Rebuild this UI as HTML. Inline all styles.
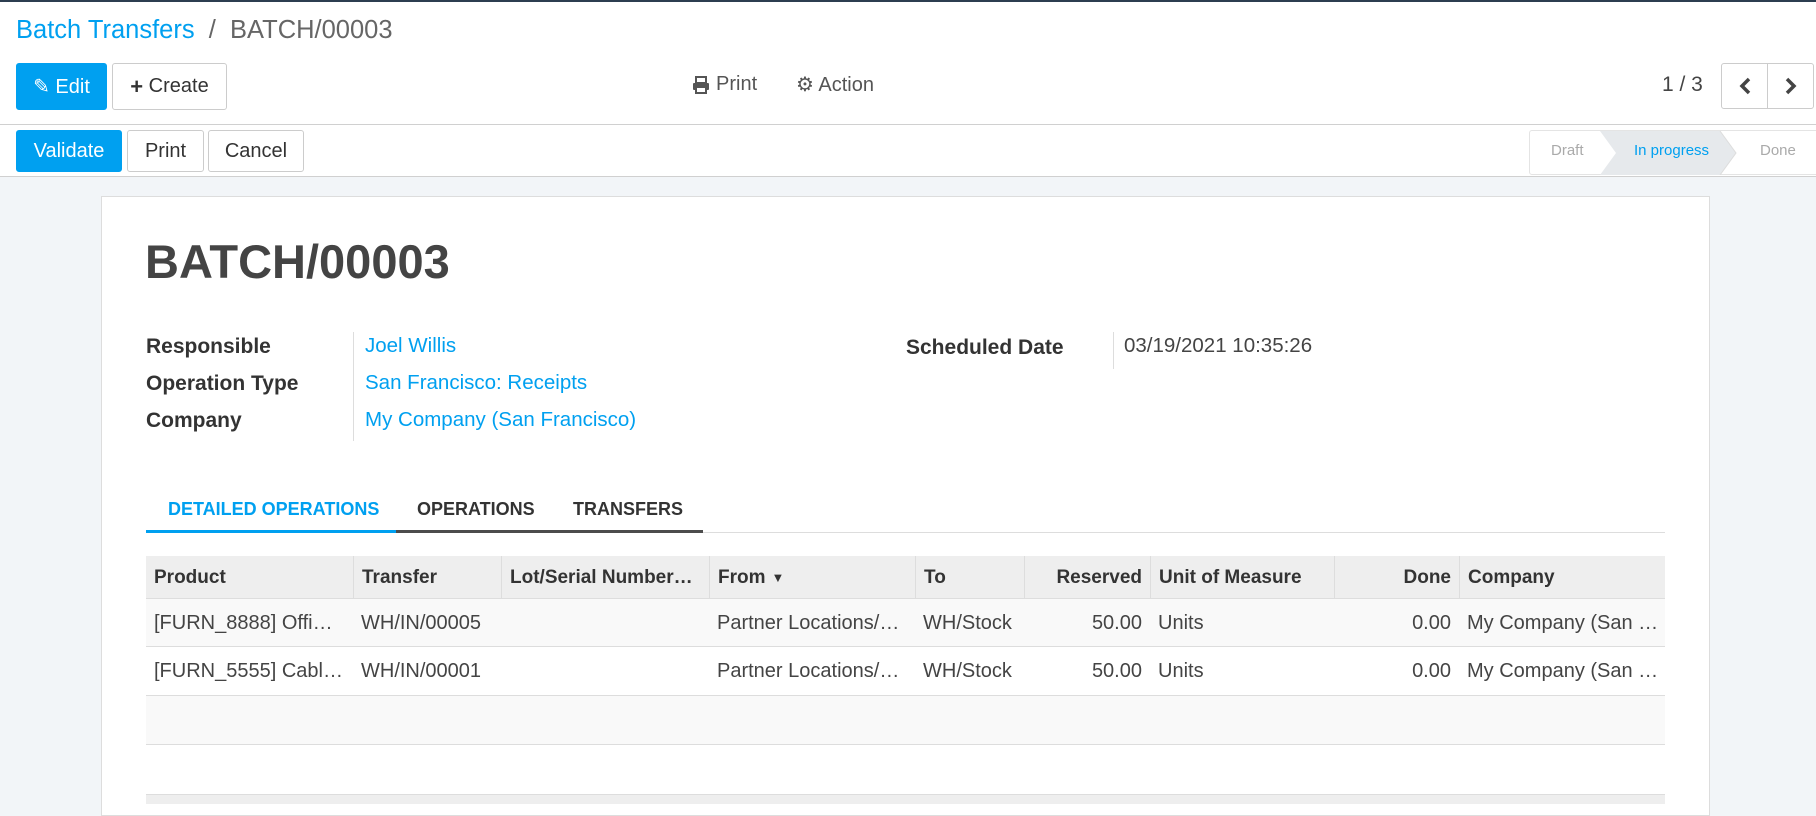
<!DOCTYPE html>
<html><head><meta charset="utf-8"><style>
*{box-sizing:border-box;margin:0;padding:0}
body{width:1816px;height:802px;overflow:hidden;font-family:"Liberation Sans",sans-serif;color:#4c4c4c;background:#f2f5f8;position:relative;font-size:18px}
.abs{position:absolute}
.top{position:absolute;left:0;top:0;width:1816px;height:177px;background:#fff;border-bottom:1px solid #d0d0d0}
.btn{position:absolute;height:47px;border:1px solid #ccc;border-radius:3px;background:#fff;display:flex;align-items:center;justify-content:center;font-size:19px;color:#333}
.pri{background:#00a0f0;border-color:#00a0f0;color:#fff}
.sheet{position:absolute;left:101px;top:196px;width:1609px;height:620px;background:#fff;border:1px solid #ddd}
.lbl{position:absolute;font-weight:bold;font-size:21px;color:#333}
.val{position:absolute;font-size:20.5px;color:#00a0f0}
.th,.td{position:absolute;display:flex;align-items:center;padding:0 8px;white-space:nowrap;overflow:hidden}
.th{font-weight:bold;font-size:19px;color:#333;border-left:1px solid #ddd}
.td{font-size:20px;color:#444}
</style></head><body>
<div class="top">
 <div class="abs" style="left:0;top:0;width:1816px;height:2px;background:#2c3e50"></div>
 <div class="abs" style="left:16px;top:16px;font-size:25.5px;color:#666"><span style="color:#00a0f0">Batch Transfers</span> &nbsp;/&nbsp; BATCH/00003</div>
 <div class="btn pri" style="left:16px;top:63px;width:91px;font-size:20px">&#9998;&nbsp;Edit</div>
 <div class="btn" style="left:112px;top:63px;width:115px;font-size:20px"><b style="font-size:22px">+</b>&nbsp;Create</div>
 <svg class="abs" style="left:692px;top:76px" width="18" height="18" viewBox="0 0 18 18"><rect x="4" y="1" width="10" height="6" fill="none" stroke="#555" stroke-width="2"/><rect x="1" y="7" width="16" height="7" rx="1" fill="#555"/><rect x="4" y="11" width="10" height="6" fill="#fff" stroke="#555" stroke-width="2"/></svg>
 <div class="abs" style="left:716px;top:73px;font-size:20px;color:#555">Print</div>
 <div class="abs" style="left:796px;top:72px;font-size:20px;color:#555">&#9881; Action</div>
 <div class="abs" style="left:1662px;top:73px;font-size:21px;color:#444">1 / 3</div>
 <div class="btn" style="left:1721px;top:63px;width:47px;height:46px;border-radius:3px 0 0 3px"><svg width="14" height="18"><polyline points="11,2 4,9 11,16" fill="none" stroke="#444" stroke-width="3.5"/></svg></div>
 <div class="btn" style="left:1767px;top:63px;width:47px;height:46px;border-radius:0 3px 3px 0"><svg width="14" height="18"><polyline points="3,2 10,9 3,16" fill="none" stroke="#444" stroke-width="3.5"/></svg></div>
 <div class="abs" style="left:0;top:124px;width:1816px;height:1px;background:#d0d0d0"></div>
 <div class="btn pri" style="left:16px;top:130px;width:106px;height:42px;font-size:20px">Validate</div>
 <div class="btn" style="left:127px;top:130px;width:77px;height:42px;font-size:20px">Print</div>
 <div class="btn" style="left:208px;top:130px;width:96px;height:42px;font-size:20px">Cancel</div>
 <div class="abs" style="left:1529px;top:130px;width:290px;height:45px;border:1px solid #e4e4e4;border-radius:3px"></div>
 <svg class="abs" style="left:1600px;top:131px" width="140" height="44"><polygon points="0,0 120,0 136,22 120,44 0,44 16,22" fill="#e6e9ec"/><polyline points="120,0 136,22 120,44" fill="none" stroke="#ddd"/></svg>
 <div class="abs" style="left:1551px;top:142px;font-size:15px;color:#aaa">Draft</div>
 <div class="abs" style="left:1634px;top:142px;font-size:15px;color:#00a0f0">In progress</div>
 <div class="abs" style="left:1760px;top:142px;font-size:15px;color:#aaa">Done</div>
</div>
<div class="sheet"></div>
<div class="abs" style="left:145px;top:234px;font-size:47px;font-weight:bold;color:#444">BATCH/00003</div>
<div class="lbl" style="left:146px;top:335px">Responsible</div>
<div class="lbl" style="left:146px;top:372px">Operation Type</div>
<div class="lbl" style="left:146px;top:409px">Company</div>
<div class="abs" style="left:353px;top:332px;width:1px;height:109px;background:#ddd"></div>
<div class="val" style="left:365px;top:334px">Joel Willis</div>
<div class="val" style="left:365px;top:371px">San Francisco: Receipts</div>
<div class="val" style="left:365px;top:408px">My Company (San Francisco)</div>
<div class="lbl" style="left:906px;top:336px">Scheduled Date</div>
<div class="abs" style="left:1113px;top:332px;width:1px;height:37px;background:#ddd"></div>
<div class="abs" style="left:1124px;top:334px;font-size:20.5px;color:#444">03/19/2021 10:35:26</div>
<div class="abs" style="left:168px;top:499px;font-size:18px;font-weight:bold;color:#00a0f0">DETAILED OPERATIONS</div>
<div class="abs" style="left:417px;top:499px;font-size:18px;font-weight:bold;color:#333">OPERATIONS</div>
<div class="abs" style="left:573px;top:499px;font-size:18px;font-weight:bold;color:#333">TRANSFERS</div>
<div class="abs" style="left:146px;top:532px;width:1519px;height:1px;background:#ddd"></div>
<div class="abs" style="left:146px;top:530px;width:250px;height:3px;background:#00a0f0"></div>
<div class="abs" style="left:396px;top:530px;width:307px;height:3px;background:#4c4c4c"></div>
<div class="abs" style="left:146px;top:556px;width:1519px;height:43px;background:#eee;border-bottom:1px solid #ddd"></div>
<div class="abs" style="left:146px;top:599px;width:1519px;height:48px;background:#f9f9f9;border-bottom:1px solid #ddd"></div>
<div class="abs" style="left:146px;top:647px;width:1519px;height:49px;background:#fff;border-bottom:1px solid #ddd"></div>
<div class="abs" style="left:146px;top:696px;width:1519px;height:49px;background:#f9f9f9;border-bottom:1px solid #ddd"></div>
<div class="abs" style="left:146px;top:794px;width:1519px;height:10px;background:#eee;border-top:1px solid #ddd"></div>
<div class="th" style="left:146px;top:556px;width:207px;height:43px;border-left:none">Product</div>
<div class="th" style="left:353px;top:556px;width:148px;height:43px">Transfer</div>
<div class="th" style="left:501px;top:556px;width:208px;height:43px">Lot/Serial Number…</div>
<div class="th" style="left:709px;top:556px;width:206px;height:43px">From <span style="font-size:13px;margin-left:6px">&#9660;</span></div>
<div class="th" style="left:915px;top:556px;width:109px;height:43px">To</div>
<div class="th" style="left:1024px;top:556px;width:126px;height:43px;justify-content:flex-end">Reserved</div>
<div class="th" style="left:1150px;top:556px;width:184px;height:43px">Unit of Measure</div>
<div class="th" style="left:1334px;top:556px;width:125px;height:43px;justify-content:flex-end">Done</div>
<div class="th" style="left:1459px;top:556px;width:206px;height:43px">Company</div>
<div class="td" style="left:146px;top:599px;width:207px;height:48px">[FURN_8888] Offi…</div>
<div class="td" style="left:353px;top:599px;width:148px;height:48px">WH/IN/00005</div>
<div class="td" style="left:709px;top:599px;width:206px;height:48px">Partner Locations/…</div>
<div class="td" style="left:915px;top:599px;width:109px;height:48px">WH/Stock</div>
<div class="td" style="left:1024px;top:599px;width:126px;height:48px;justify-content:flex-end">50.00</div>
<div class="td" style="left:1150px;top:599px;width:184px;height:48px">Units</div>
<div class="td" style="left:1334px;top:599px;width:125px;height:48px;justify-content:flex-end">0.00</div>
<div class="td" style="left:1459px;top:599px;width:206px;height:48px">My Company (San …</div>
<div class="td" style="left:146px;top:647px;width:207px;height:49px">[FURN_5555] Cabl…</div>
<div class="td" style="left:353px;top:647px;width:148px;height:49px">WH/IN/00001</div>
<div class="td" style="left:709px;top:647px;width:206px;height:49px">Partner Locations/…</div>
<div class="td" style="left:915px;top:647px;width:109px;height:49px">WH/Stock</div>
<div class="td" style="left:1024px;top:647px;width:126px;height:49px;justify-content:flex-end">50.00</div>
<div class="td" style="left:1150px;top:647px;width:184px;height:49px">Units</div>
<div class="td" style="left:1334px;top:647px;width:125px;height:49px;justify-content:flex-end">0.00</div>
<div class="td" style="left:1459px;top:647px;width:206px;height:49px">My Company (San …</div>
</body></html>
